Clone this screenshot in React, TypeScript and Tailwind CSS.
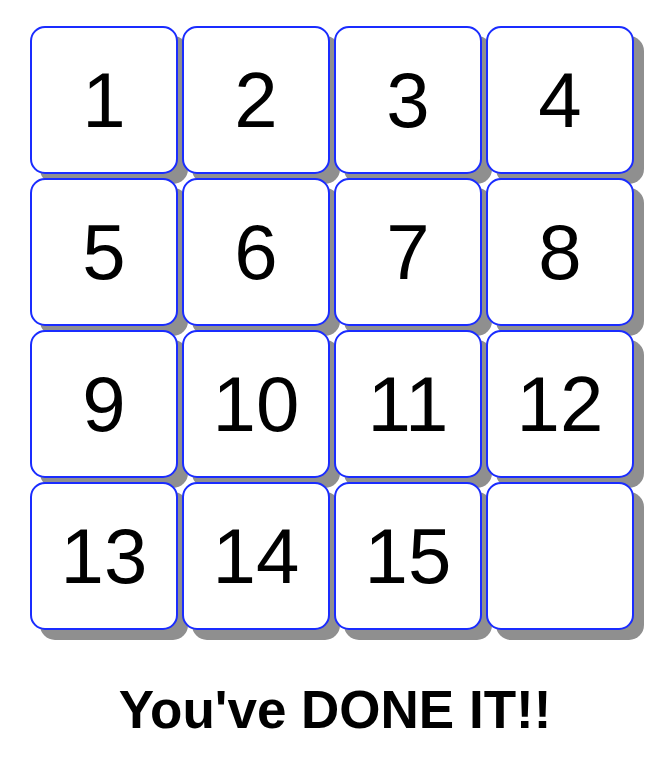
import React from "react";

const tiles: (number | null)[] = [1, 2, 3, 4, 5, 6, 7, 8, 9, 10, 11, 12, 13, 14, 15, null];

export default function App() {
  return (
    <div className="w-[670px] h-[764px] bg-white">
      <div className="pt-[26px] pl-[30px]">
        <div className="grid grid-cols-[repeat(4,148px)] gap-[4px]">
          {tiles.map((n, i) => (
            <div
              key={i}
              className="w-[148px] h-[148px] rounded-[15px] border-2 border-[#1a2cff] bg-white shadow-[10px_10px_0_0_#8f8f8f] flex items-center justify-center text-black text-[78px] leading-none"
              style={{ fontFamily: '"Liberation Sans", Arial, sans-serif' }}
            >
              {n ?? ""}
            </div>
          ))}
        </div>
      </div>
      <div
        className="mt-[53px] text-center font-bold text-[53px] leading-none text-black"
        style={{ fontFamily: '"Liberation Sans", Arial, sans-serif' }}
      >
        You've DONE IT!!
      </div>
    </div>
  );
}
